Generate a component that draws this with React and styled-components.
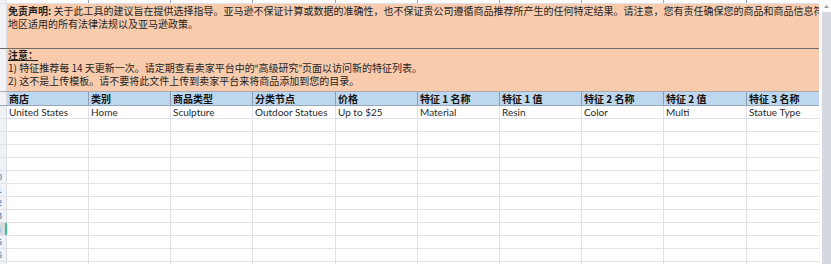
import React from 'react';
import styled, { createGlobalStyle } from 'styled-components';

const GlobalStyle = createGlobalStyle`
  html, body {
    margin: 0;
    padding: 0;
    background: #ffffff;
  }
  body {
    font-family: "Noto Sans CJK SC", "Noto Sans", sans-serif;
    font-size: 10px;
    color: #1f1f1f;
  }
`;

const COLS = [82, 82, 82, 83, 82, 82, 82, 82, 83, 82];

const headers = ['商店', '类别', '商品类型', '分类节点', '价格', '特征 1 名称', '特征 1 值', '特征 2 名称', '特征 2 值', '特征 3 名称'];
const values = ['United States', 'Home', 'Sculpture', 'Outdoor Statues', 'Up to $25', 'Material', 'Resin', 'Color', 'Multi', 'Statue Type'];

const Window = styled.div`
  display: flex;
  width: 831px;
  height: 264px;
  overflow: hidden;
  background: #ffffff;
`;

const Sheet = styled.div`
  flex: 0 0 819px;
  display: flex;
  flex-direction: column;
  overflow: hidden;
`;

const Row = styled.div`
  display: flex;
  flex-shrink: 0;
  height: ${(p) => p.$h}px;
  border-bottom: 1px solid ${(p) => p.$line || '#e0e1eb'};
  background: ${(p) => p.$bg || 'transparent'};
`;

const Gutter = styled.div`
  flex: 0 0 7px;
  display: flex;
  justify-content: flex-end;
  overflow: hidden;
  background: ${(p) => (p.$active ? '#dadbdf' : '#f1f2f6')};
  border-right: ${(p) => (p.$active ? '2px solid #3cc28c' : '1px solid #dcdde4')};
  box-sizing: border-box;
`;

const RowNum = styled.span`
  flex: 0 0 18px;
  text-align: center;
  font-family: "Liberation Sans", sans-serif;
  font-size: 9px;
  line-height: ${(p) => p.$h}px;
  color: #4d6fa8;
`;

const Cell = styled.div`
  flex: 0 0 ${(p) => p.$w}px;
  box-sizing: border-box;
  padding: 0 2px;
  overflow: hidden;
  white-space: nowrap;
  border-right: 1px solid ${(p) => p.$line || '#e0e1eb'};
  font-family: ${(p) => (p.$bold ? '"Noto Sans CJK SC", sans-serif' : 'Lato, "Noto Sans CJK SC", sans-serif')};
  font-weight: ${(p) => (p.$bold ? 700 : 400)};
  font-size: 10px;
  line-height: ${(p) => p.$h}px;
  color: ${(p) => (p.$bold ? '#111' : '#2a2a2a')};
`;

const Merged = styled.div`
  flex: 1;
  min-width: 0;
  overflow: hidden;
  white-space: nowrap;
  background: #f8cbad;
  padding: 0 1px;
  font-size: 10px;
`;

const Lead = styled.div`
  margin-top: ${(p) => p.$shift || 0}px;
`;

const Line = styled.div`
  line-height: 13px;
  height: 13px;
`;

const Strong = styled.b`
  font-weight: 700;
`;

const Underlined = styled.b`
  font-weight: 700;
  text-decoration: underline;
  text-underline-offset: 1px;
`;

const Quote = styled.span`
  font-family: Lato, sans-serif;
`;

const Scrollbar = styled.div`
  flex: 1;
  display: flex;
  flex-direction: column;
  background: #fbfbfc;
  padding-left: 3px;
`;

const ArrowUp = styled.div`
  height: 12px;
  display: flex;
  align-items: center;
  justify-content: center;
`;

const Thumb = styled.div`
  flex: 1;
  background: #d6d8e0;
`;

const GridRow = ({ h = 12, num, active, bg, line, cellLine, bold, cells = [] }) => (
  <Row $h={h} $bg={bg} $line={line}>
    <Gutter $active={active}>
      <RowNum $h={h}>{num}</RowNum>
    </Gutter>
    {COLS.map((w, i) => (
      <Cell key={i} $w={w} $h={h} $line={cellLine} $bold={bold}>
        {cells[i]}
      </Cell>
    ))}
  </Row>
);

export default function App() {
  const empty = Array.from({ length: 12 }, (_, i) => i + 6);
  return (
    <Window>
      <GlobalStyle />
      <Sheet>
        <GridRow h={3} num="1" cellLine="#9aa3b2" />
        <Row $h={44} $line="#6f6a66">
          <Gutter>
            <RowNum $h={44}>2</RowNum>
          </Gutter>
          <Merged>
            <Lead $shift={0}>
              <Line>
                <Strong>免责声明:</Strong> 关于此工具的建议旨在提供选择指导。亚马逊不保证计算或数据的准确性，也不保证贵公司遵循商品推荐所产生的任何特定结果。请注意，您有责任确保您的商品和商品信息符合您所在国家/
              </Line>
              <Line>地区适用的所有法律法规以及亚马逊政策。</Line>
            </Lead>
          </Merged>
        </Row>
        <Row $h={42} $line="#a9aab2">
          <Gutter>
            <RowNum $h={42}>3</RowNum>
          </Gutter>
          <Merged>
            <Lead $shift={-1}>
              <Line>
                <Underlined>注意：</Underlined>
              </Line>
              <Line>
                1) 特征推荐每 14 天更新一次。请定期查看卖家平台中的<Quote>“</Quote>高级研究<Quote>”</Quote>页面以访问新的特征列表。
              </Line>
              <Line>2) 这不是上传模板。请不要将此文件上传到卖家平台来将商品添加到您的目录。</Line>
            </Lead>
          </Merged>
        </Row>
        <GridRow h={13} num="4" bg="#bdd7ee" cellLine="#8e9bb0" line="#9aa8bc" bold cells={headers} />
        <GridRow h={12} num="5" cells={values} />
        {empty.map((n) => (
          <GridRow key={n} h={12} num={n} active={n === 14} />
        ))}
      </Sheet>
      <Scrollbar>
        <ArrowUp>
          <svg width="5" height="3" viewBox="0 0 5 3">
            <path d="M0 3 L2.5 0 L5 3 Z" fill="#9a9ca3" />
          </svg>
        </ArrowUp>
        <Thumb />
      </Scrollbar>
    </Window>
  );
}
